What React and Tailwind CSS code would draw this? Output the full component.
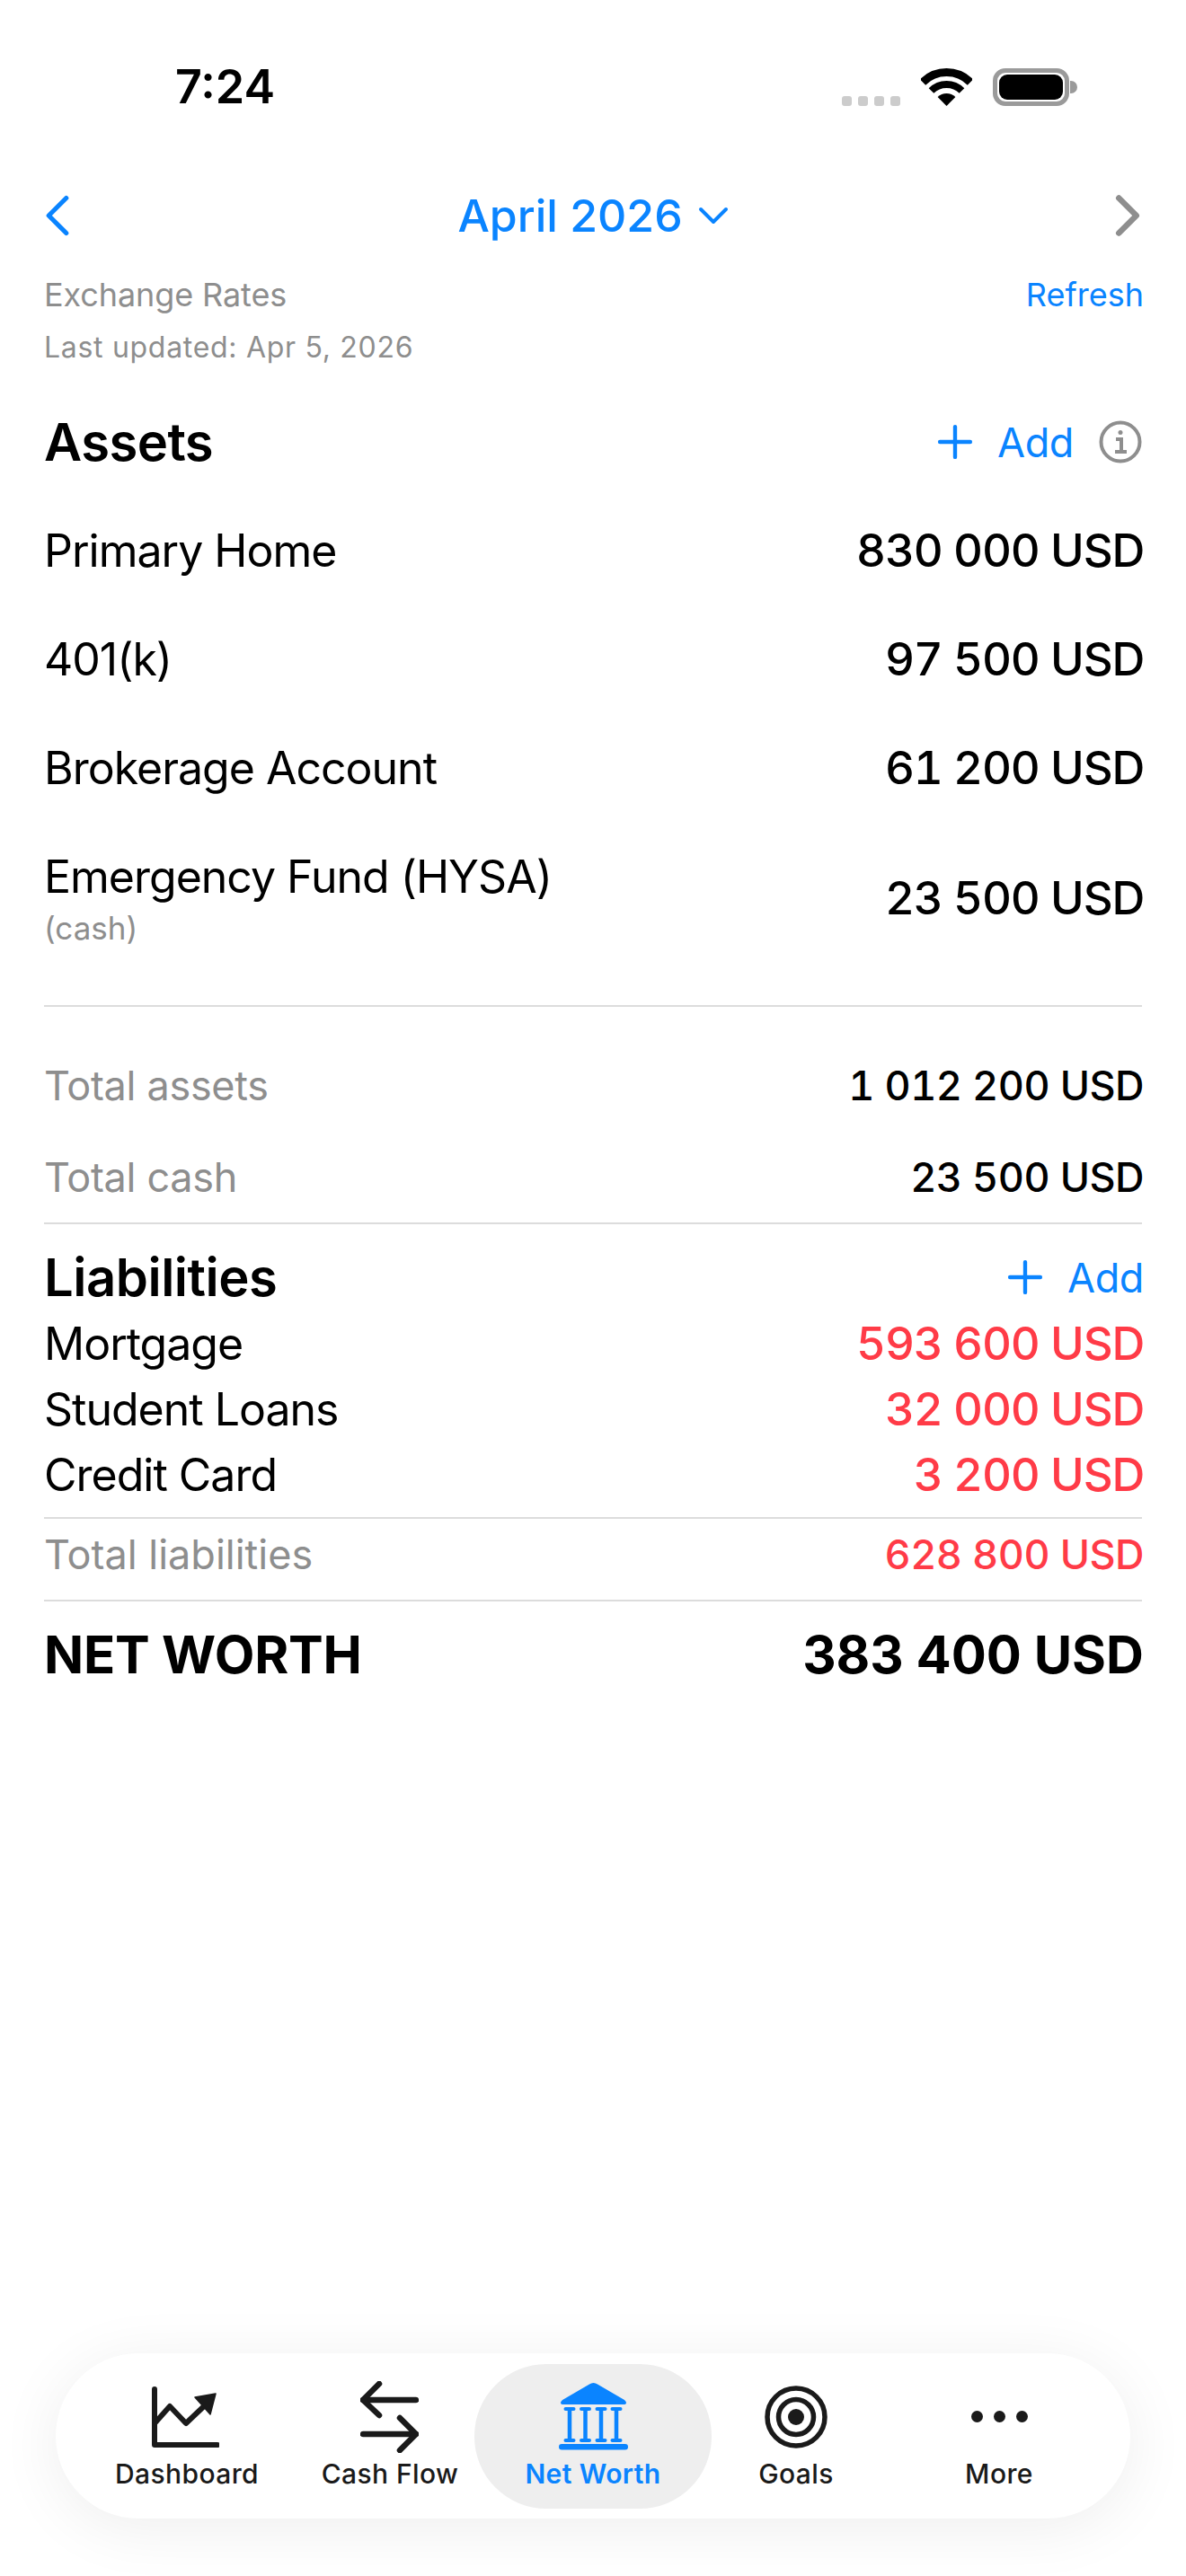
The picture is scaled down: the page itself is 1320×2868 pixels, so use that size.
import { ChevronDown, ChevronLeft, ChevronRight, Plus } from 'lucide-react';

const assets = [
    { name: 'Primary Home', value: '830 000 USD' },
    { name: '401(k)', value: '97 500 USD' },
    { name: 'Brokerage Account', value: '61 200 USD' },
];

const liabilities = [
    { name: 'Mortgage', value: '593 600 USD' },
    { name: 'Student Loans', value: '32 000 USD' },
    { name: 'Credit Card', value: '3 200 USD' },
];

function Wifi() {
    return (
        <svg width="57" height="42" viewBox="0 0 57 42" fill="none">
            <path d="M2 15.5A37.5 37.5 0 0 1 55 15.5" stroke="#000" strokeWidth="9" />
            <path d="M11.5 25A24 24 0 0 1 45.5 25" stroke="#000" strokeWidth="8" />
            <path d="M28.5 42L18.6 32.1A14 14 0 0 1 38.4 32.1Z" fill="#000" />
        </svg>
    );
}

function Battery() {
    return (
        <div className="flex items-center">
            <div className="w-[85px] h-[42px] rounded-[14px] border-[5px] border-[#9a9a9a] p-[2px]">
                <div className="w-full h-full rounded-[9px] bg-black" />
            </div>
            <div className="w-[8px] h-[14px] ml-[1px] rounded-r-full bg-[#9a9a9a]" />
        </div>
    );
}

function StatusBar() {
    return (
        <div className="h-[194px] flex items-center justify-between pl-[195px] pr-[121px]">
            <span className="text-[52px] font-semibold text-black">7:24</span>
            <div className="flex items-end gap-[23px]">
                <div className="flex gap-[7px]">
                    {[0, 1, 2, 3].map((i) => (
                        <div key={i} className="w-[11px] h-[11px] rounded-[3px] bg-[#cccccc]" />
                    ))}
                </div>
                <Wifi />
                <Battery />
            </div>
        </div>
    );
}

function AddButton() {
    return (
        <div className="flex items-center gap-[28px] text-[#0a84ff]">
            <Plus size={58} strokeWidth={1.8} className="-mr-[10px]" />
            <span className="text-[45px] pt-[1px] tracking-[-0.4px]">Add</span>
        </div>
    );
}

function DashboardIcon() {
    return (
        <svg width="75" height="68" viewBox="0 0 75 68" fill="none" stroke="#1a1a1a" strokeWidth="6" strokeLinecap="round" strokeLinejoin="round" className="-ml-[4px]">
            <path d="M3 3V65H73" />
            <path d="M4 40L20 22L38 41L58 22" />
            <path d="M71 8L48 12L65 31Z" fill="#1a1a1a" strokeWidth="1.5" />
        </svg>
    );
}

function CashFlowIcon() {
    return (
        <svg width="65" height="80" viewBox="0 0 65 80" fill="none" stroke="#1a1a1a" strokeWidth="6.5" strokeLinecap="round" strokeLinejoin="round" className="-ml-[2px]">
            <path d="M3 21H62" />
            <path d="M21 3L3 21L21 38" />
            <path d="M3 59H62" />
            <path d="M44 41L62 59L44 77" />
        </svg>
    );
}

function BankIcon() {
    const columns = [12, 29.5, 47, 64];
    return (
        <svg width="77" height="75" viewBox="0 0 77 75" fill="#0a84ff">
            <path d="M38.5 0Q36 0 34 1.5L4 19Q2 21 2 22Q2 24 5 24H72Q75 24 75 22Q75 21 73 19L43 1.5Q41 0 38.5 0Z" />
            {columns.map((x) => (
                <g key={x}>
                    <rect x={x - 6.5} y="27" width="13" height="4" rx="2" />
                    <rect x={x - 2.25} y="29" width="4.5" height="34" />
                    <rect x={x - 6.5} y="62" width="13" height="4" rx="2" />
                </g>
            ))}
            <rect x="0" y="68" width="77" height="6.5" rx="3.25" />
        </svg>
    );
}

function GoalsIcon() {
    return (
        <svg width="70" height="70" viewBox="0 0 70 70" fill="none" stroke="#1a1a1a" strokeWidth="5.5">
            <circle cx="35" cy="35" r="32" />
            <circle cx="35" cy="35" r="19.5" />
            <circle cx="35" cy="35" r="9" fill="#1a1a1a" stroke="none" />
        </svg>
    );
}

function MoreIcon() {
    return (
        <div className="h-[70px] flex items-center gap-[12px]">
            <div className="w-[13px] h-[13px] rounded-full bg-[#1a1a1a]" />
            <div className="w-[13px] h-[13px] rounded-full bg-[#1a1a1a]" />
            <div className="w-[13px] h-[13px] rounded-full bg-[#1a1a1a]" />
        </div>
    );
}

function Tab({ label, icon, active }) {
    return (
        <div className={`h-[161px] flex flex-col items-center rounded-[80px] ${active ? 'bg-[#eeeeee] -mx-[19px] w-[264px] text-[#0a84ff]' : 'w-[226px] text-[#1a1a1a]'}`}>
            <div className="h-[100px] mt-[9px] flex items-center justify-center">{icon}</div>
            <span className={`text-[30px] leading-[36px] tracking-[0.4px] -mt-[5px] ${active ? 'font-semibold' : 'font-medium'}`}>{label}</span>
        </div>
    );
}

function TabBar() {
    return (
        <div className="mt-auto mb-[64px] mx-[62px] h-[184px] rounded-[92px] bg-white shadow-[0_10px_70px_rgba(0,0,0,0.07)] flex items-center justify-center">
            <Tab label="Dashboard" icon={<DashboardIcon />} />
            <Tab label="Cash Flow" icon={<CashFlowIcon />} />
            <Tab label="Net Worth" icon={<BankIcon />} active />
            <Tab label="Goals" icon={<GoalsIcon />} />
            <Tab label="More" icon={<MoreIcon />} />
        </div>
    );
}

export default function App() {
    return (
        <div className="w-[1320px] h-[2868px] flex flex-col bg-white font-['Inter',sans-serif] text-black">
            <StatusBar />

            <div className="px-[49px]">
                {/* Month picker */}
                <div className="h-[92px] flex items-center justify-between">
                    <ChevronLeft size={78} strokeWidth={1.6} className="text-[#0a84ff] -ml-[24px]" />
                    <div className="flex items-center text-[#0a84ff]">
                        <span className="text-[50px] font-medium">April 2026</span>
                        <ChevronDown size={56} strokeWidth={1.7} className="ml-[6px] -mr-[12px]" />
                    </div>
                    <ChevronRight size={78} strokeWidth={2} className="text-[#8e8e8e] -mr-[23px]" />
                </div>

                {/* Exchange rates */}
                <div className="h-[118px] flex justify-between -mr-[2px]">
                    <div className="flex flex-col">
                        <span className="h-[84px] flex items-center text-[36px] tracking-[-0.1px] text-[#8e8e8e]">Exchange Rates</span>
                        <span className="h-[34px] flex items-center text-[32px] tracking-[0.7px] text-[#8e8e8e]">Last updated: Apr 5, 2026</span>
                    </div>
                    <span className="h-[84px] flex items-center text-[36px] text-[#0a84ff]">Refresh</span>
                </div>

                {/* Assets */}
                <div className="h-[120px] mt-[28px] flex items-center justify-between">
                    <span className="text-[58px] font-semibold tracking-[-0.6px]">Assets</span>
                    <div className="flex items-center gap-[28px]">
                        <AddButton />
                        <svg width="48" height="48" viewBox="0 0 48 48" fill="none" stroke="#8e8e8e" strokeWidth="4">
                            <circle cx="24" cy="24" r="21.5" />
                            <path d="M19 21H25V35M18 35H31" />
                            <circle cx="24" cy="13.5" r="2.5" fill="#8e8e8e" stroke="none" />
                        </svg>
                    </div>
                </div>

                {assets.map((a) => (
                    <div key={a.name} className="h-[121px] pt-[2px] flex items-center justify-between -mr-[2px]">
                        <span className="text-[50px] tracking-[-1px]">{a.name}</span>
                        <span className="text-[51px] font-medium tracking-[-1.2px] tabular-nums">{a.value}</span>
                    </div>
                ))}
                <div className="h-[168px] pt-[2px] flex items-center justify-between -mr-[2px]">
                    <div className="flex flex-col pt-[5px]">
                        <span className="text-[50px] leading-[60px] tracking-[-1px]">Emergency Fund (HYSA)</span>
                        <span className="text-[35px] leading-[54px] text-[#8e8e8e]">(cash)</span>
                    </div>
                    <span className="text-[51px] font-medium tracking-[-1.2px] tabular-nums">23 500 USD</span>
                </div>

                <div className="h-[2px] mt-[36px] bg-[#dcdcdc]" />

                <div className="mt-[36px] h-[102px] pt-[2px] flex items-center justify-between -mr-[2px]">
                    <span className="text-[45px] tracking-[-0.3px] text-[#8e8e8e]">Total assets</span>
                    <span className="text-[45px] font-medium tracking-[-0.5px] tabular-nums">1 012 200 USD</span>
                </div>
                <div className="h-[102px] pt-[2px] flex items-center justify-between -mr-[2px]">
                    <span className="text-[45px] tracking-[-0.3px] text-[#8e8e8e]">Total cash</span>
                    <span className="text-[45px] font-medium tracking-[-0.5px] tabular-nums">23 500 USD</span>
                </div>
                <div className="h-[2px] bg-[#dcdcdc]" />

                {/* Liabilities */}
                <div className="h-[74px] mt-[22px] flex items-center justify-between -mr-[2px]">
                    <span className="text-[58px] font-semibold tracking-[-0.5px]">Liabilities</span>
                    <AddButton />
                </div>
                {liabilities.map((l) => (
                    <div key={l.name} className="h-[73px] pt-[2px] flex items-center justify-between -mr-[2px]">
                        <span className="text-[50px] tracking-[-1px]">{l.name}</span>
                        <span className="text-[51px] font-medium tracking-[-1.2px] tabular-nums text-[#ff3b47]">{l.value}</span>
                    </div>
                ))}
                <div className="h-[2px] mt-[11px] bg-[#dcdcdc]" />
                <div className="h-[80px] flex items-center justify-between -mr-[2px]">
                    <span className="text-[45px] text-[#8e8e8e]">Total liabilities</span>
                    <span className="text-[45px] font-medium tracking-[-0.5px] tabular-nums text-[#ff3b47]">628 800 USD</span>
                </div>
                <div className="h-[2px] mt-[10px] bg-[#dcdcdc]" />

                {/* Net worth */}
                <div className="h-[118px] flex items-center justify-between text-[58px] font-bold -mr-[2px]">
                    <span className="tracking-[-0.2px]">NET WORTH</span>
                    <span>383 400 USD</span>
                </div>
            </div>

            <TabBar />
        </div>
    );
}
